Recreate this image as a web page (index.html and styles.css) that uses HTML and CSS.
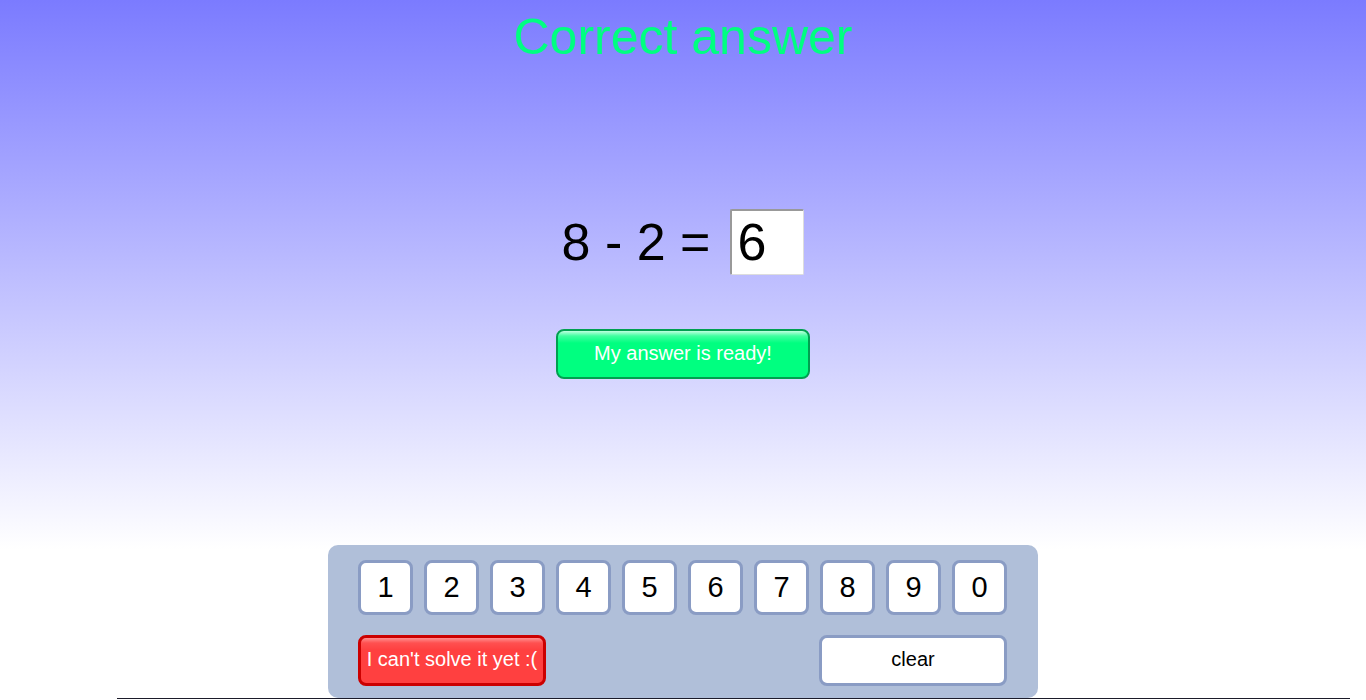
FILE: index.html
```html
<!DOCTYPE html>
<html lang="en">
<head>
<meta charset="utf-8">
<title>Math practice</title>
<link rel="stylesheet" href="styles.css">
</head>
<body>
<div class="stage">
  <h1 class="title">Correct answer</h1>
  <div class="equation">
    <span class="expr">8 - 2 =</span>
    <div class="answer">6</div>
  </div>
  <button class="btn ready">My answer is ready!</button>
</div>
<div class="keypad">
  <div class="keys">
    <button class="key">1</button>
    <button class="key">2</button>
    <button class="key">3</button>
    <button class="key">4</button>
    <button class="key">5</button>
    <button class="key">6</button>
    <button class="key">7</button>
    <button class="key">8</button>
    <button class="key">9</button>
    <button class="key">0</button>
  </div>
  <div class="actions">
    <button class="btn giveup">I can't solve it yet :(</button>
    <button class="btn clear">clear</button>
  </div>
</div>
<div class="rule"></div>
</body>
</html>
```

FILE: styles.css
```css
html, body {
  margin: 0;
  padding: 0;
}
body {
  width: 1366px;
  height: 700px;
  overflow: hidden;
  font-family: "Liberation Sans", Arial, sans-serif;
  background: linear-gradient(to bottom, #7b7bff 0px, #ffffff 550px, #ffffff 700px);
}
.stage {
  height: 545px;
  display: flex;
  flex-direction: column;
  align-items: center;
}
.title {
  margin: 9px 0 0;
  font-size: 50px;
  font-weight: normal;
  line-height: 57px;
  color: #00ff80;
}
.equation {
  margin-top: 143px;
  display: flex;
  align-items: center;
  gap: 20px;
}
.expr {
  font-size: 52px;
  line-height: 60px;
  color: #000;
}
.answer {
  box-sizing: border-box;
  width: 74px;
  height: 66px;
  background: #fff;
  border-top: 2px solid #999;
  border-left: 2px solid #999;
  border-right: 1px solid #ddd;
  border-bottom: 1px solid #ddd;
  border-radius: 2px;
  font-size: 52px;
  line-height: 62px;
  padding-left: 5px;
  color: #000;
}
.btn {
  font-family: "Liberation Sans", Arial, sans-serif;
  font-size: 20px;
  box-sizing: border-box;
  border-radius: 8px;
  cursor: pointer;
  padding: 0;
}
.ready {
  margin-top: 54px;
  width: 254px;
  height: 50px;
  color: #fff;
  border: 2px solid #00a050;
  background: linear-gradient(to bottom, #c0ffe0 0px, #40ffa0 5px, #00ff80 12px, #00ff80 100%);
  padding-bottom: 2px;
}
.keypad {
  box-sizing: border-box;
  width: 710px;
  margin-left: 328px;
  height: 153px;
  background: #b0bfd9;
  border-radius: 10px;
  padding: 15px 31px 0 30px;
}
.keys {
  display: flex;
  gap: 11px;
}
.key {
  box-sizing: border-box;
  width: 55px;
  height: 55px;
  background: #fff;
  border: 3px solid #8a9cc4;
  border-radius: 8px;
  font-family: "Liberation Sans", Arial, sans-serif;
  font-size: 29px;
  color: #000;
  padding: 0;
}
.actions {
  margin-top: 20px;
  display: flex;
  justify-content: space-between;
}
.giveup {
  width: 188px;
  height: 51px;
  color: #fff;
  border: 3px solid #cc0000;
  background: linear-gradient(to bottom, #ff9090 0px, #ff5050 5px, #ff4040 12px, #ff4040 100%);
  padding-bottom: 2px;
}
.clear {
  width: 188px;
  height: 51px;
  color: #000;
  background: #fff;
  border: 3px solid #8a9cc4;
  padding-bottom: 2px;
}
.rule {
  margin-left: 117px;
  width: 1233px;
  height: 0;
  border-top: 1px solid #1b1b2a;
}
```
